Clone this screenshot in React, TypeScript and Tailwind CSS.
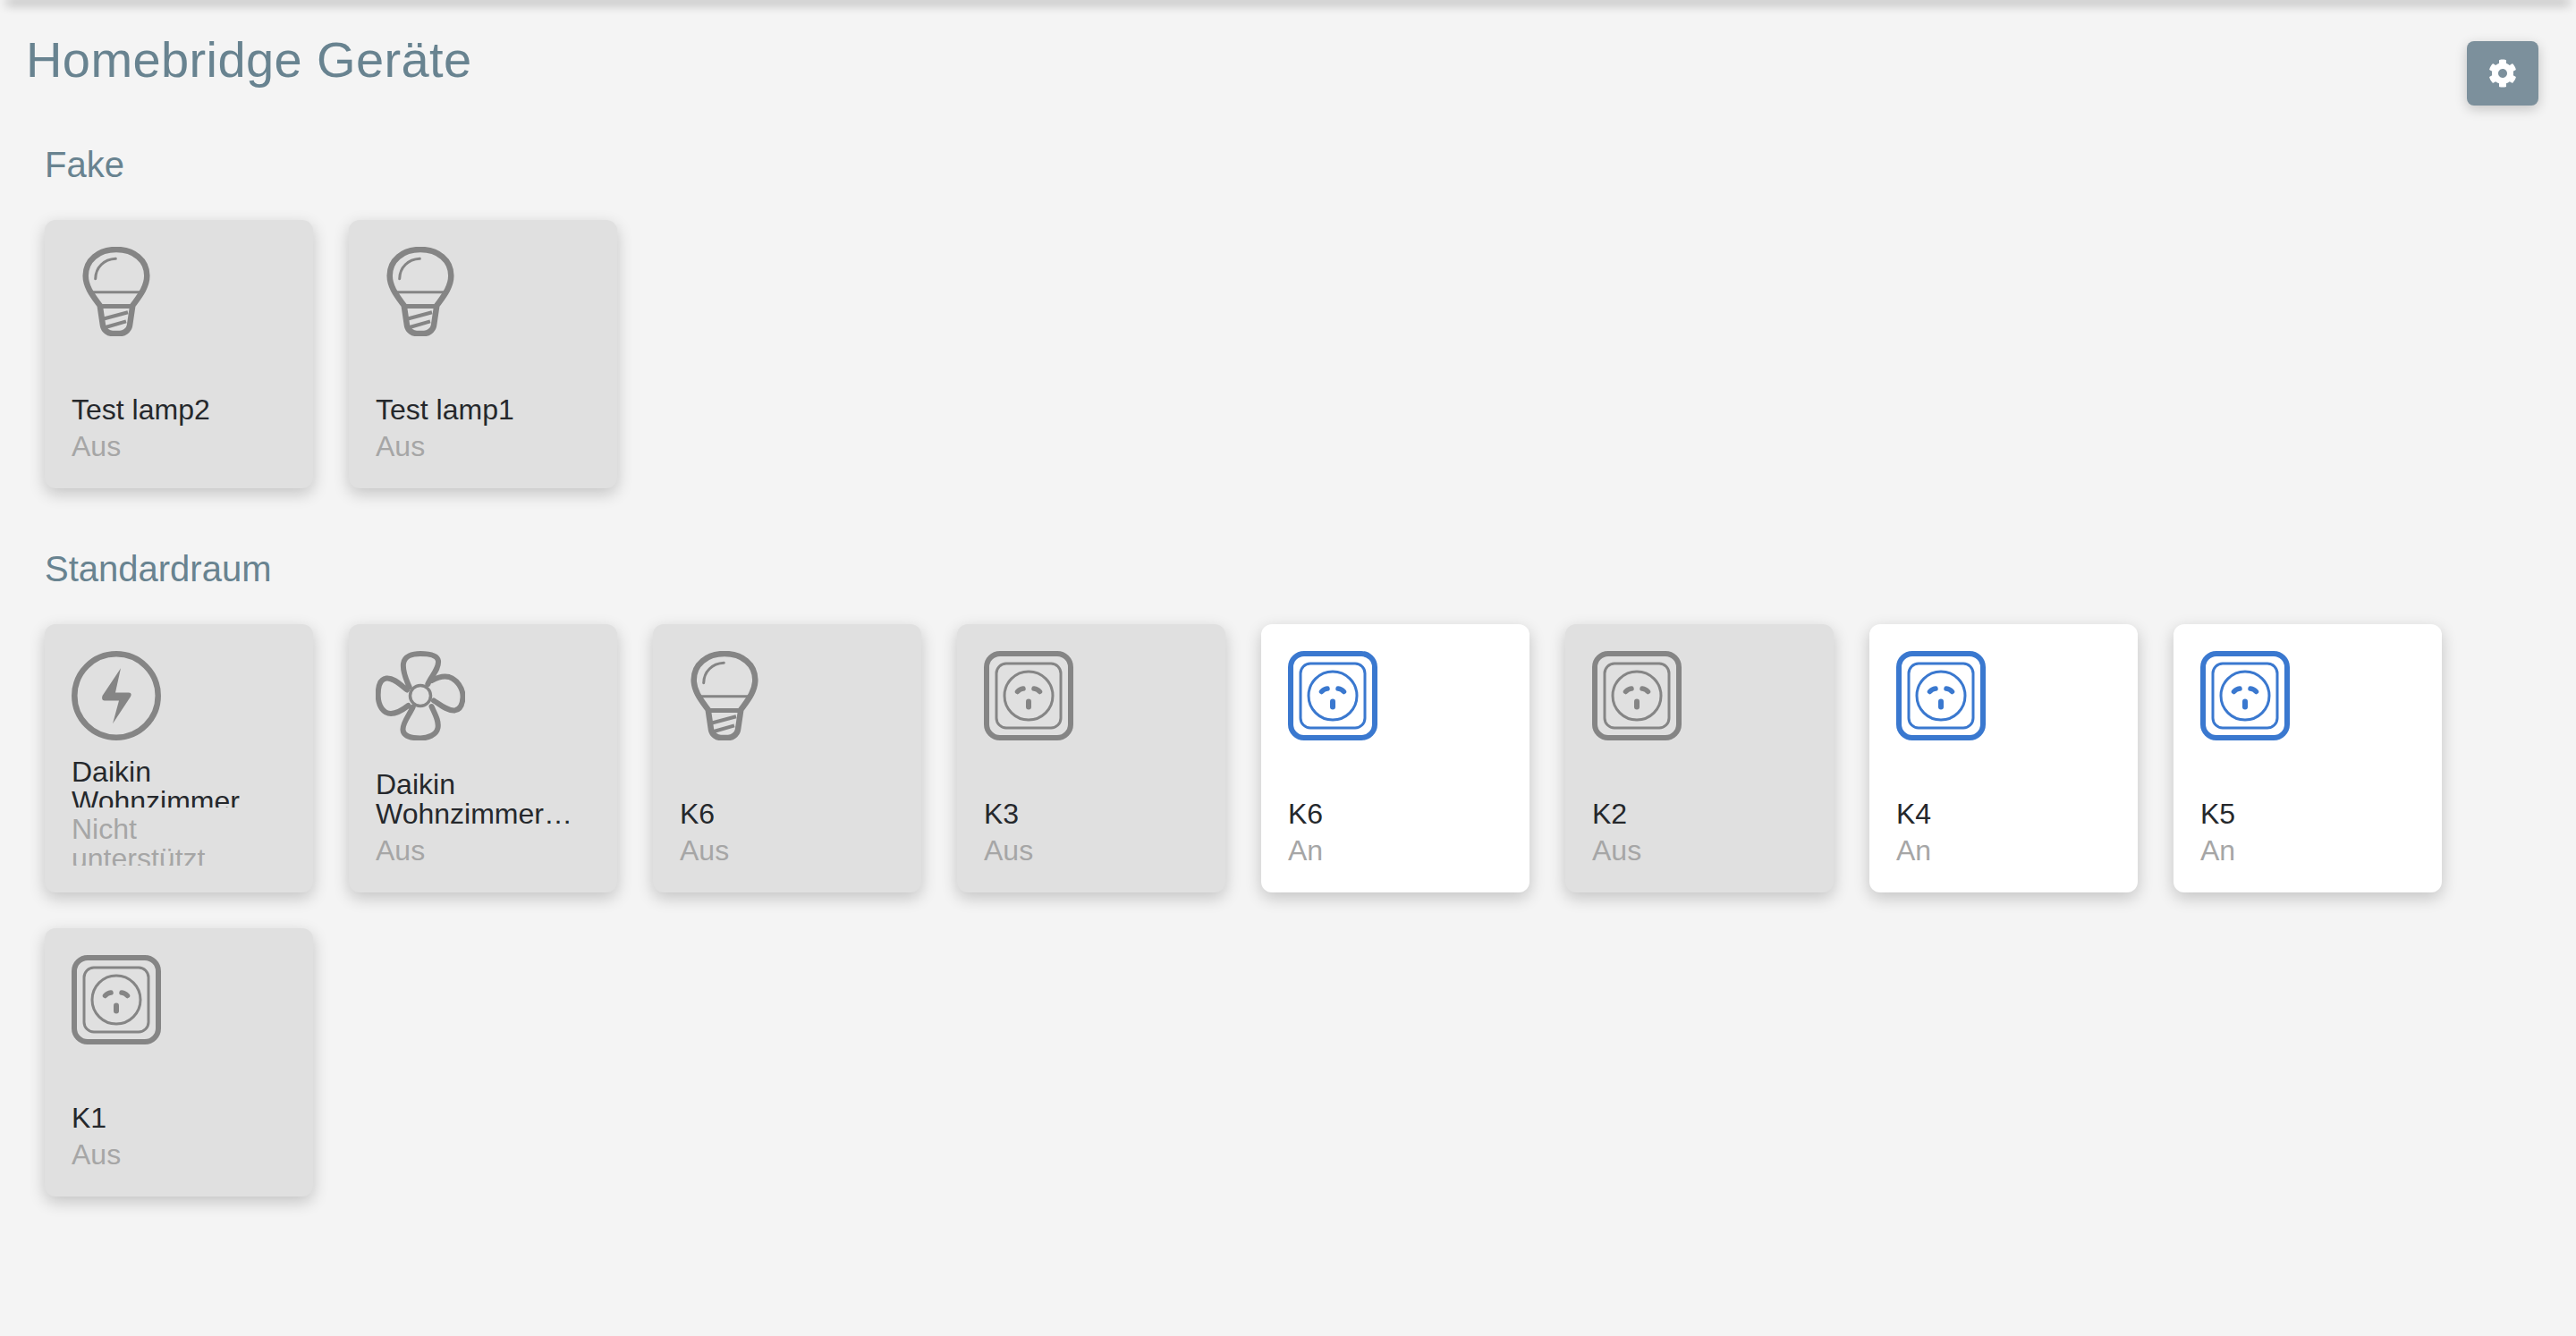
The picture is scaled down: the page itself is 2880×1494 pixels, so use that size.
import { FaCog } from "react-icons/fa";

type IconProps = { color: string };

function Lamp({ color }: IconProps) {
  return (
    <svg viewBox="0 0 100 100" className="h-[100px] w-[100px]" fill="none" stroke={color}>
      <path
        strokeWidth="6.5"
        strokeLinejoin="round"
        d="M50 3C30 3 15.7 15 15.7 32.3C15.7 45 24 55 31.7 65.7L35 88C36 94 42 97 46 97L54 97C58 97 64 94 65 88L68.3 65.7C76 55 84.3 45 84.3 32.3C84.3 15 70 3 50 3Z"
      />
      <path strokeWidth="5" d="M31 66.5H69" />
      <path strokeWidth="3" d="M19 50.7H81" />
      <path strokeWidth="4" d="M35 80.7L63 73.3M38 90L61 83.3" />
      <path strokeWidth="3" strokeLinecap="round" d="M26.7 35.7C27 23 36 14 49.3 13.3" />
    </svg>
  );
}

function Bolt({ color }: IconProps) {
  return (
    <svg viewBox="0 0 100 100" className="h-[100px] w-[100px]" fill="none">
      <circle cx="50" cy="50" r="46.7" stroke={color} strokeWidth="6.5" />
      <path
        fill={color}
        d="M55 19.3L34.5 50Q33 55.5 37 55.5L53 55.5L46 81.3L66 51Q68 46.5 64 46.5L49 46.5Z"
      />
    </svg>
  );
}

function Fan({ color }: IconProps) {
  return (
    <svg viewBox="0 0 100 100" className="h-[100px] w-[100px]" fill="none" stroke={color} strokeLinecap="round">
      <circle cx="50" cy="50" r="11.5" strokeWidth="3.5" />
      <path
        strokeWidth="6"
        d="M37.7 40.3C33 30 30 22 31 14C32 6 41 3 50 3C60 3 69 5 70 11C71 20 62 28 58.3 37M63 33C70 29 76 27.5 82 29C91 32 98 42 97.5 52C97 60 94 66 88 66.5C80 67 72 60 65 55.5M62.5 62C66 70 71 78 69.5 86C68 94 58 97.5 50 97.5C40 97.5 31 95.5 30.5 88C30 80 38 71 41.7 62.5M36.5 61C30 66 24 70 17 70C9 70 3 62 2.7 50C2.5 40 5 31.5 12 30.5C20 29.5 28 38 35 43.5"
      />
    </svg>
  );
}

function Outlet({ color }: IconProps) {
  return (
    <svg viewBox="0 0 100 100" className="h-[100px] w-[100px]" fill="none" stroke={color} strokeLinecap="round">
      <rect x="3" y="3" width="94" height="94" rx="15" strokeWidth="6" />
      <rect x="14" y="14" width="72" height="72" rx="11" strokeWidth="3" />
      <circle cx="50" cy="50" r="27" strokeWidth="3" />
      <path strokeWidth="5.5" d="M37.5 45.5Q40 42.5 44 42M56 42Q60 42.5 62.5 45.5" />
      <path strokeWidth="6" d="M50 56.5V62.5" />
    </svg>
  );
}

const GRAY = "#858585";
const BLUE = "#3a78cf";

type Device = {
  name: string;
  status: string;
  icon: typeof Lamp;
  on?: boolean;
  clipped?: boolean;
};

const fake: Device[] = [
  { name: "Test lamp2", status: "Aus", icon: Lamp },
  { name: "Test lamp1", status: "Aus", icon: Lamp },
];

const standard: Device[] = [
  { name: "Daikin Wohnzimmer", status: "Nicht unterstützt", icon: Bolt, clipped: true },
  { name: "Daikin Wohnzimmer…", status: "Aus", icon: Fan },
  { name: "K6", status: "Aus", icon: Lamp },
  { name: "K3", status: "Aus", icon: Outlet },
  { name: "K6", status: "An", icon: Outlet, on: true },
  { name: "K2", status: "Aus", icon: Outlet },
  { name: "K4", status: "An", icon: Outlet, on: true },
  { name: "K5", status: "An", icon: Outlet, on: true },
  { name: "K1", status: "Aus", icon: Outlet },
];

function Tile({ device }: { device: Device }) {
  const Icon = device.icon;
  return (
    <div
      className={`flex h-[300px] w-[300px] flex-col rounded-[12px] p-[30px] shadow-[0_6px_18px_rgba(0,0,0,0.2)] ${
        device.on ? "bg-white" : "bg-[#e0e0e0]"
      }`}
    >
      <Icon color={device.on ? BLUE : GRAY} />
      <div className="mt-auto flex flex-col gap-[8px] text-[32px] leading-[33px]">
        <div className={`text-[#25282c] ${device.clipped ? "h-[56px] max-w-[210px] overflow-hidden" : ""}`}>
          {device.name}
        </div>
        <div className={`text-[#a6a6a6] ${device.clipped ? "h-[57px] max-w-[210px] overflow-hidden" : ""}`}>
          {device.status}
        </div>
      </div>
    </div>
  );
}

function Section({ title, devices, className }: { title: string; devices: Device[]; className: string }) {
  return (
    <section className={`pl-[50px] ${className}`}>
      <h2 className="mb-[38px] text-[40px] leading-[48px] text-[#688390]">{title}</h2>
      <div className="flex flex-wrap gap-[40px]">
        {devices.map((device, i) => (
          <Tile key={i} device={device} />
        ))}
      </div>
    </section>
  );
}

export default function App() {
  return (
    <div className="relative min-h-screen overflow-hidden bg-[#f4f4f4] font-['Liberation_Sans',Arial,sans-serif]">
      {/* shadow of the navbar sitting above the viewport */}
      <div className="absolute inset-x-[10px] top-0 h-0 shadow-[0_2px_12px_3px_rgba(0,0,0,0.32)]" />
      <header className="flex items-start justify-between pl-[29px] pr-[42px] pt-[35px]">
        <h1 className="text-[56px] leading-[64px] tracking-[0.4px] text-[#688390]">Homebridge Geräte</h1>
        <button className="mt-[11px] flex h-[72px] w-[80px] items-center justify-center rounded-[8px] bg-[#7c909c] text-white shadow-[0_4px_14px_rgba(0,0,0,0.2)]">
          <FaCog size={32} />
        </button>
      </header>
      <Section title="Fake" devices={fake} className="mt-[42px]" />
      <Section title="Standardraum" devices={standard} className="mt-[66px]" />
    </div>
  );
}
